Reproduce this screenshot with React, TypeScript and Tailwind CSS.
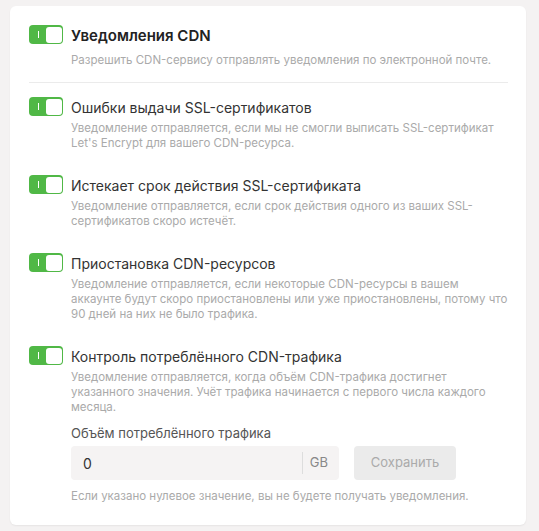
import React from "react";

type Item = {
  title: string;
  text: string[];
};

const items: Item[] = [
  {
    title: "Ошибки выдачи SSL-сертификатов",
    text: [
      "Уведомление отправляется, если мы не смогли выписать SSL-сертификат",
      "Let's Encrypt для вашего CDN-ресурса.",
    ],
  },
  {
    title: "Истекает срок действия SSL-сертификата",
    text: [
      "Уведомление отправляется, если срок действия одного из ваших SSL-",
      "сертификатов скоро истечёт.",
    ],
  },
  {
    title: "Приостановка CDN-ресурсов",
    text: [
      "Уведомление отправляется, если некоторые CDN-ресурсы в вашем",
      "аккаунте будут скоро приостановлены или уже приостановлены, потому что",
      "90 дней на них не было трафика.",
    ],
  },
];

function Toggle() {
  return (
    <div className="relative mt-[-1px] flex h-[19px] w-[34px] shrink-0 items-center rounded-[4px] bg-[#50b846] p-[1.5px]">
      <span className="absolute left-[8.5px] top-[6px] h-[7px] w-[1.5px] bg-white" />
      <span className="ml-auto h-4 w-4 rounded-[3px] bg-white" />
    </div>
  );
}

function Desc({ lines, className = "mt-[3px]" }: { lines: string[]; className?: string }) {
  return (
    <div className={`${className} whitespace-nowrap text-[11.5px] leading-[15px] text-[#aaaaaa]`}>
      {lines.map((l) => (
        <div key={l}>{l}</div>
      ))}
    </div>
  );
}

export default function App() {
  return (
    <div
      className="min-h-[531px] bg-[#f4f2f2] pt-[6px] pl-[10px] pr-[13px]"
      style={{ fontFamily: "Inter, 'Noto Sans', sans-serif" }}
    >
      <div className="rounded-[6px] bg-white px-[19px] pt-[20px] pb-[21px] shadow-[0_1px_2px_rgba(0,0,0,0.06)]">
        <div className="flex gap-[8px]">
          <Toggle />
          <div>
            <div className="text-[15px] font-semibold leading-[20px] text-[#222]">Уведомления CDN</div>
            <Desc
              className="mt-[7px]"
              lines={["Разрешить CDN-сервису отправлять уведомления по электронной почте."]}
            />
          </div>
        </div>

        <div className="mt-[14px] mr-[-1px] h-px bg-[#ebebeb]" />

        <div className="mt-[15px] flex flex-col gap-[25px]">
          {items.map((it) => (
            <div key={it.title} className="flex gap-[8px]">
              <Toggle />
              <div>
                <div className="text-[14px] leading-[20px] text-[#333]">{it.title}</div>
                <Desc lines={it.text} />
              </div>
            </div>
          ))}

          <div className="flex gap-[8px]">
            <Toggle />
            <div className="flex-1">
              <div className="text-[14px] leading-[20px] text-[#333]">Контроль потреблённого CDN-трафика</div>
              <Desc
                lines={[
                  "Уведомление отправляется, когда объём CDN-трафика достигнет",
                  "указанного значения. Учёт трафика начинается с первого числа каждого",
                  "месяца.",
                ]}
              />
              <div className="mt-[9px] text-[13px] leading-[18px] text-[#555]">Объём потреблённого трафика</div>
              <div className="mt-[4px] flex gap-[15px]">
                <div className="flex h-[34px] w-[268px] items-center rounded-[4px] bg-[#f5f3f3] pl-[12px] pr-[11px]">
                  <span className="flex-1 text-[14px] text-[#333]">0</span>
                  <span className="mr-[7px] h-[22px] w-px bg-[#dddddd]" />
                  <span className="text-[13px] text-[#888]">GB</span>
                </div>
                <button className="h-[34px] w-[102px] rounded-[4px] bg-[#ebebeb] text-[13px] text-[#aaaaaa]">
                  Сохранить
                </button>
              </div>
              <div className="mt-[9px] text-[11.5px] leading-[15px] text-[#aaaaaa]">
                Если указано нулевое значение, вы не будете получать уведомления.
              </div>
            </div>
          </div>
        </div>
      </div>
    </div>
  );
}
